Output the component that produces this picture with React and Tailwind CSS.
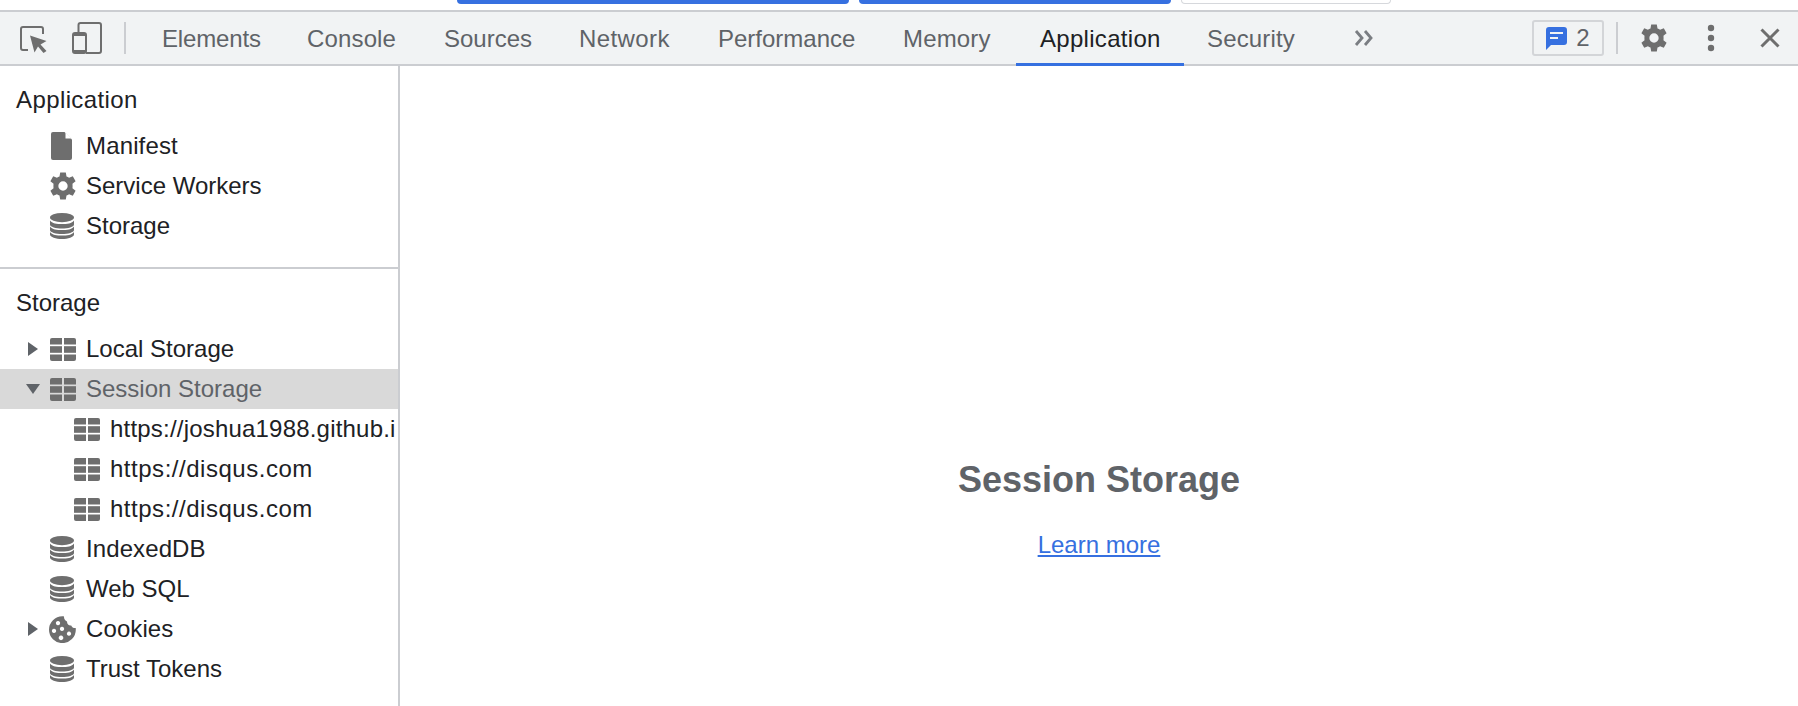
const ICON = "#6e6e6e";

function DocIcon() {
  return (
    <svg width="21" height="28" viewBox="0 0 21 28" className="mr-[3px] shrink-0">
      <path d="M2 0H13.5L21 7.5V26A2 2 0 0 1 19 28H2A2 2 0 0 1 0 26V2A2 2 0 0 1 2 0Z" fill={ICON} />
      <path d="M14.5 0.5L20.5 6.5H14.5Z" fill="#fff" />
    </svg>
  );
}

function GearIcon({ size = 28 }) {
  return (
    <svg width={size} height={size} viewBox="0 0 24 24" className="shrink-0">
      <path
        fillRule="evenodd"
        fill={ICON}
        d="M14.4 0.4H9.6L9 3.8C8.2 4.1 7.5 4.5 6.8 5L3.6 3.7L1.2 7.9L3.9 10.1C3.8 10.5 3.8 11.2 3.8 12C3.8 12.8 3.8 13.5 3.9 13.9L1.2 16.1L3.6 20.3L6.8 19C7.5 19.5 8.2 19.9 9 20.2L9.6 23.6H14.4L15 20.2C15.8 19.9 16.5 19.5 17.2 19L20.4 20.3L22.8 16.1L20.1 13.9C20.2 13.5 20.2 12.8 20.2 12C20.2 11.2 20.2 10.5 20.1 10.1L22.8 7.9L20.4 3.7L17.2 5C16.5 4.5 15.8 4.1 15 3.8ZM12 8A4 4 0 1 1 12 16A4 4 0 1 1 12 8Z"
      />
    </svg>
  );
}

function DbIcon() {
  return (
    <svg width="24" height="26" viewBox="0 0 24 26" className="mr-[2px] shrink-0">
      <ellipse cx="12" cy="4.6" rx="12" ry="4.6" fill={ICON} />
      <path d="M0 7.5C2 10.5 7 11 12 11S22 10.5 24 7.5V11.5C24 14 18 15.5 12 15.5S0 14 0 11.5Z" fill={ICON} />
      <path d="M0 13.5C2 16.5 7 17 12 17S22 16.5 24 13.5V17C24 19.5 18 21 12 21S0 19.5 0 17Z" fill={ICON} />
      <path d="M0 19C2 22 7 22.5 12 22.5S22 22 24 19V21.5C24 24 18 26 12 26S0 24 0 21.5Z" fill={ICON} />
    </svg>
  );
}

function TableIcon() {
  return (
    <svg width="26" height="23" viewBox="0 0 26 23" className="shrink-0">
      <path d="M2 0H12V6.5H0V2A2 2 0 0 1 2 0Z" fill={ICON} />
      <path d="M14 0H24A2 2 0 0 1 26 2V6.5H14Z" fill={ICON} />
      <rect x="0" y="8.2" width="12" height="6.6" fill={ICON} />
      <rect x="14" y="8.2" width="12" height="6.6" fill={ICON} />
      <path d="M0 16.5H12V23H2A2 2 0 0 1 0 21Z" fill={ICON} />
      <path d="M14 16.5H26V21A2 2 0 0 1 24 23H14Z" fill={ICON} />
    </svg>
  );
}

function CookieIcon() {
  return (
    <svg width="27" height="27" viewBox="0 0 27 27" className="mr-[2px] shrink-0">
      <path
        fillRule="evenodd"
        fill={ICON}
        d="M13.5 0.3C14.2 0.3 14.6 0.4 15 0.5C14.8 3 16.2 4.8 18 5.4C18 8 20 9.8 22.2 9.4C22.8 11.2 24.6 12.2 26.7 12C26.8 12.5 26.8 13 26.8 13.5A13.4 13.4 0 1 1 13.5 0.3Z
           M9 5a2.1 2.1 0 1 0 .01 0Z M5 12.8a2.1 2.1 0 1 0 .01 0Z M13 10.8a2.1 2.1 0 1 0 .01 0Z M20 15.6a2.1 2.1 0 1 0 .01 0Z M12 19.6a2.3 2.3 0 1 0 .01 0Z"
      />
    </svg>
  );
}

function Caret({ open }) {
  return (
    <svg width="16" height="16" viewBox="0 0 16 16" className="shrink-0">
      {open ? <path d="M1 3H15L8 13Z" fill="#5f6368" /> : <path d="M3 1V15L13 8Z" fill="#5f6368" />}
    </svg>
  );
}

function Row({ icon, label, caret, open, depth = 0, selected, track = "" }) {
  return (
    <div
      className={`flex h-10 items-center overflow-hidden whitespace-nowrap pr-[2px] ${selected ? "bg-[#d9d9d9] text-[#5f6368]" : "text-[#202124]"}`}
    >
      <div className="flex w-[49px] shrink-0 justify-end pr-[8px]">{caret && <Caret open={open} />}</div>
      <div className={`flex h-10 shrink-0 items-center justify-center ${depth ? "ml-[24px] w-[28px]" : "w-[28px]"}`}>{icon}</div>
      <span className={`ml-[9px] min-w-0 overflow-hidden ${track}`}>{label}</span>
    </div>
  );
}

function SectionTitle({ children, track = "" }) {
  return <div className={`flex h-10 items-center pl-4 text-[#202124] ${track}`}>{children}</div>;
}

const TABS = [
  { name: "Elements", cls: "w-[145px] pl-[24px] tracking-[-0.15px]" },
  { name: "Console", cls: "w-[136px] pl-[24px] tracking-[0.15px]" },
  { name: "Sources", cls: "w-[138px] pl-[25px]" },
  { name: "Network", cls: "w-[136px] pl-[22px] tracking-[0.4px]" },
  { name: "Performance", cls: "w-[186px] pl-[25px]" },
  { name: "Memory", cls: "w-[137px] pl-[24px] tracking-[0.15px]" },
  { name: "Application", cls: "w-[168px] pl-[24px] tracking-[0.3px] border-b-[3px] border-[#3670e0] pt-[3px] text-[#202124]" },
  { name: "Security", cls: "w-[136px] pl-[23px] tracking-[0.15px]" },
];

export default function App() {
  return (
    <div className="flex h-[706px] w-[1798px] flex-col overflow-hidden bg-white font-['Liberation_Sans',Arial,sans-serif] text-[24px]">
      <div className="flex h-[10px] items-start pl-[457px]">
        <div className="h-[4px] w-[392px] rounded-b-md bg-[#3670e0]" />
        <div className="ml-[10px] h-[4px] w-[312px] rounded-b-md bg-[#3670e0]" />
        <div className="ml-[10px] h-[4px] w-[210px] rounded-b-md border border-t-0 border-[#d6d8dc] bg-white" />
      </div>

      <div className="flex h-[56px] shrink-0 items-center border-y-2 border-[#cbcdd1] bg-[#f1f3f4] text-[#5f6368]">
        <div className="flex w-[124px] shrink-0 items-center">
          <svg width="27" height="27" viewBox="0 0 27 27" className="ml-[20px] mt-[2px] shrink-0">
            <path d="M8 24H3A2 2 0 0 1 1 22V3A2 2 0 0 1 3 1H21A2 2 0 0 1 23 3V8" fill="none" stroke={ICON} strokeWidth="2" />
            <path d="M10 9.5L26.5 15L20.5 18.5L26.5 25L23.5 27L18 20.5L14.5 26.5Z" fill={ICON} />
          </svg>
          <svg width="30" height="32" viewBox="0 0 30 32" className="ml-[25px] shrink-0">
            <path d="M6.5 10V3A2 2 0 0 1 8.5 1H27A2 2 0 0 1 29 3V29A2 2 0 0 1 27 31H14" fill="none" stroke={ICON} strokeWidth="2" />
            <rect x="1" y="11" width="13" height="20" rx="2" fill="none" stroke={ICON} strokeWidth="2" />
            <rect x="1" y="28" width="13" height="3" fill={ICON} />
            <rect x="1" y="11" width="13" height="3" fill={ICON} />
          </svg>
        </div>
        <div className="h-[32px] w-[2px] shrink-0 bg-[#cbcdd1]" />
        <div className="ml-[12px] flex h-full items-stretch">
          {TABS.map((t) => (
            <div key={t.name} className={`flex h-[54px] shrink-0 items-center ${t.cls}`}>
              {t.name}
            </div>
          ))}
        </div>
        <svg width="20" height="18" viewBox="0 0 20 18" className="ml-[34px] shrink-0">
          <path d="M2 2L8 9L2 16M11 2L17 9L11 16" fill="none" stroke="#7a7d82" strokeWidth="2.8" />
        </svg>
        <div className="ml-auto flex items-center">
          <div className="flex h-[36px] w-[72px] items-center justify-center gap-[9px] rounded-[3px] border-2 border-[#d3d5d8]">
            <svg width="21" height="23" viewBox="0 0 21 23" className="shrink-0">
              <path d="M3 0H18A3 3 0 0 1 21 3V15A3 3 0 0 1 18 18H5L0 23V3A3 3 0 0 1 3 0Z" fill="#3670e0" />
              <rect x="4" y="5" width="13" height="2" fill="#f1f3f4" />
              <rect x="4" y="10" width="8" height="2" fill="#f1f3f4" />
            </svg>
            <span className="text-[#5f6368]">2</span>
          </div>
          <div className="ml-[12px] h-[32px] w-[2px] bg-[#cbcdd1]" />
          <div className="ml-[22px]">
            <GearIcon size={28} />
          </div>
          <svg width="8" height="28" viewBox="0 0 8 28" className="ml-[39px] shrink-0">
            <circle cx="4" cy="4" r="3.2" fill={ICON} />
            <circle cx="4" cy="14" r="3.2" fill={ICON} />
            <circle cx="4" cy="24" r="3.2" fill={ICON} />
          </svg>
          <svg width="20" height="20" viewBox="0 0 20 20" className="ml-[45px] mr-[18px] shrink-0">
            <path d="M1.5 1.5L18.5 18.5M18.5 1.5L1.5 18.5" fill="none" stroke={ICON} strokeWidth="3" />
          </svg>
        </div>
      </div>

      <div className="flex min-h-0 flex-1">
        <div className="w-[400px] shrink-0 overflow-hidden border-r-2 border-[#cbcdd1] pt-[14px]">
          <SectionTitle track="tracking-[0.4px]">Application</SectionTitle>
          <div className="mt-[6px]">
            <Row icon={<DocIcon />} label="Manifest" track="tracking-[0.15px]" />
            <Row icon={<GearIcon size={28} />} label="Service Workers" />
            <Row icon={<DbIcon />} label="Storage" />
          </div>
          <div className="mt-[21px] h-[2px] bg-[#cbcdd1]" />
          <div className="mt-[14px]">
            <SectionTitle>Storage</SectionTitle>
          </div>
          <div className="mt-[6px]">
            <Row icon={<TableIcon />} label="Local Storage" caret />
            <Row icon={<TableIcon />} label="Session Storage" caret open selected />
            <Row icon={<TableIcon />} label="https://joshua1988.github.io/" depth={1} track="tracking-[0.2px]" />
            <Row icon={<TableIcon />} label="https://disqus.com" depth={1} track="tracking-[0.52px]" />
            <Row icon={<TableIcon />} label="https://disqus.com" depth={1} track="tracking-[0.52px]" />
            <Row icon={<DbIcon />} label="IndexedDB" track="tracking-[0.1px]" />
            <Row icon={<DbIcon />} label="Web SQL" />
            <Row icon={<CookieIcon />} label="Cookies" caret track="tracking-[0.1px]" />
            <Row icon={<DbIcon />} label="Trust Tokens" />
          </div>
        </div>
        <div className="flex flex-1 flex-col items-center pt-[392px]">
          <div className="text-[36px] font-bold leading-[44px] text-[#5f6368]">Session Storage</div>
          <a className="mt-[25px] text-[#3670e0] underline">Learn more</a>
        </div>
      </div>
    </div>
  );
}
